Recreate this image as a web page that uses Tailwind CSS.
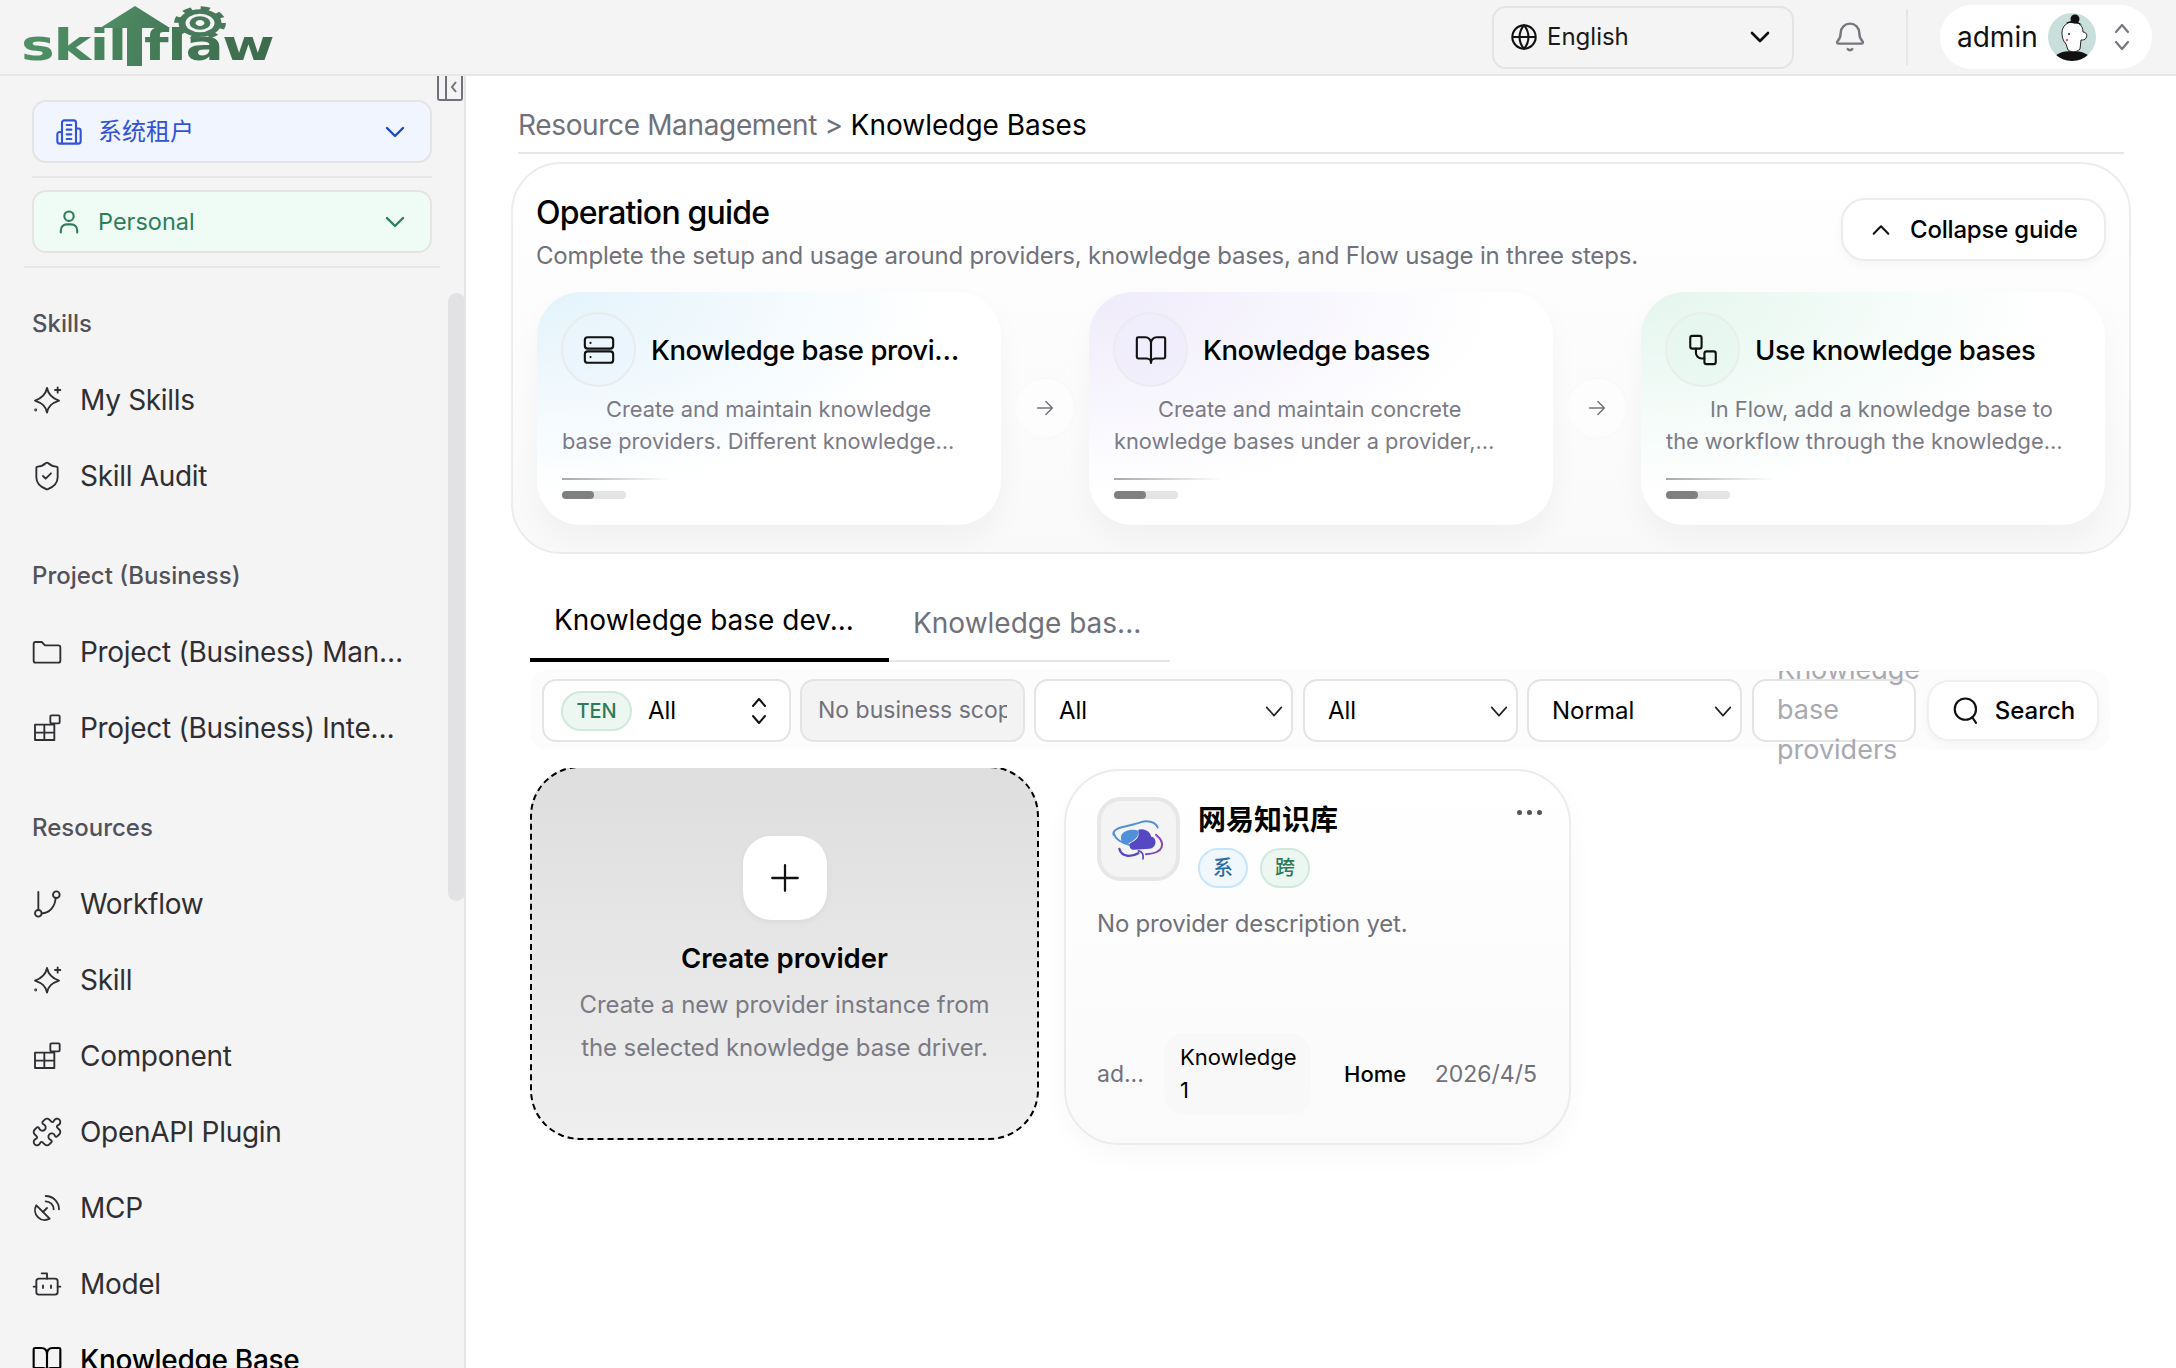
<!DOCTYPE html>
<html lang="en">
<head>
  <meta charset="UTF-8" />
  <title>Knowledge Bases | skillflaw</title>
  <script src="https://cdn.jsdelivr.net/npm/@tailwindcss/browser@4"></script>
</head>
<body class="bg-white text-black font-['Inter','Noto_Sans_CJK_SC',sans-serif]">
<div class="flex flex-col h-[1368px] w-[2176px] overflow-hidden">

  <!-- top bar -->
  <header class="flex items-center justify-between h-[76px] shrink-0 bg-[#f4f4f4] border-b-2 border-[#e6e6e6] pr-[24px]">
    <div class="relative w-[280px] h-[74px]">
      <span class="absolute left-[21px] top-[17px] origin-left scale-x-[1.35] font-['DejaVu_Sans'] font-bold text-[42px] leading-[58px] tracking-[-1px] text-transparent bg-clip-text bg-gradient-to-r from-[#4f9165] to-[#3c6a4c]">skillflaw</span>
      <svg class="absolute left-0 top-0" width="280" height="74" viewBox="0 0 280 74">
        <defs><linearGradient id="lg" x1="0" x2="1" y1="0" y2="0.3"><stop offset="0" stop-color="#4f9165"/><stop offset="1" stop-color="#47795a"/></linearGradient></defs>
        <path d="M100 28 135 6l35 22h-28v38h-15V28z" fill="url(#lg)"/>
        <g transform="translate(200 23) scale(1 .64)" fill="none" stroke="#47795a">
          <circle r="18" stroke-width="7"/>
          <circle r="23" stroke-width="6" stroke-dasharray="9 9.060"/>
          <circle r="7.500" stroke-width="6"/>
        </g>
      </svg>
    </div>
    <div class="flex items-center">
      <div class="flex items-center w-[302px] h-[63px] rounded-[14px] border-2 border-[#e4e4e4] pl-[16px] pr-[20px] mr-[40px]">
        <svg class="w-[28px] h-[28px] mr-[9px]" viewBox="0 0 24 24" fill="none" stroke="#111" stroke-width="1.800"><circle cx="12" cy="12" r="10"/><path d="M2 12h20M12 2a15 15 0 0 1 0 20 15 15 0 0 1 0-20z"/></svg>
        <span class="text-[24px] text-[#1a1a1a]">English</span>
        <svg class="ml-auto w-[24px] h-[24px]" viewBox="0 0 24 24" fill="none" stroke="#111" stroke-width="2.600" stroke-linecap="round" stroke-linejoin="round"><path d="m4 8 8 8 8-8"/></svg>
      </div>
      <svg class="w-[32px] h-[34px]" viewBox="0 0 24 24" fill="none" stroke="#77777f" stroke-width="1.800" stroke-linecap="round" stroke-linejoin="round"><path d="M3.300 17a1 1 0 0 1-.8-1.600C3.800 14 5 13 5 9a7 7 0 0 1 14 0c0 4 1.200 5 2.500 6.400a1 1 0 0 1-.8 1.600z"/><path d="M10.300 21a2 2 0 0 0 3.400 0"/></svg>
      <div class="w-[2px] h-[56px] bg-[#e6e6e6] ml-[40px] mr-[32px]"></div>
      <div class="flex items-center w-[212px] h-[64px] rounded-full bg-white pl-[17px]">
        <span class="text-[28px] text-[#111]">admin</span>
        <svg class="w-[48px] h-[48px] ml-[10px]" viewBox="0 0 48 48">
          <clipPath id="av"><circle cx="24" cy="24" r="24"/></clipPath>
          <g clip-path="url(#av)">
            <rect width="48" height="48" fill="#c9dfdb"/>
            <path d="M4 48c2-7 10-10 20-10s18 3 20 10z" fill="#111"/>
            <path d="M14 20c0-7 5-11 11-11s10 4 10 10c3 0 5 3 3 6-1 2-3 2-5 2l-1 9c-4 4-9 3-12 1l-2-6c-3-3-4-7-4-11z" fill="#fff" stroke="#222" stroke-width="1"/>
            <circle cx="27" cy="6" r="4.500" fill="#111"/>
            <path d="M18 10c4-3 12-3 16 2-5-2-10-2-16-2z" fill="#111"/>
            <circle cx="21" cy="21" r="1" fill="#222"/><circle cx="19" cy="27" r="1.200" fill="#e57"/>
          </g>
        </svg>
        <svg class="w-[22px] h-[34px] ml-[15px]" viewBox="0 0 22 34" fill="none" stroke="#77777f" stroke-width="2.200" stroke-linecap="round" stroke-linejoin="round"><path d="m5 12 6-7 6 7M5 22l6 7 6-7"/></svg>
      </div>
    </div>
  </header>

  <div class="flex flex-1 min-h-0">
    <!-- sidebar -->
    <aside class="relative w-[466px] shrink-0 bg-[#f4f4f4] border-r-2 border-[#e6e6e6] overflow-hidden">
      <button class="absolute left-[437px] top-0 w-[26px] h-[25px] flex border-2 border-t-0 border-[#71717a] rounded-b-[3px]">
        <span class="w-[8px] h-full border-r-2 border-[#71717a]"></span>
        <svg class="w-[14px] h-[22px]" viewBox="0 0 14 22" fill="none" stroke="#71717a" stroke-width="2"><path d="M9 6 5 11l4 5"/></svg>
      </button>
      <div class="absolute left-[448px] top-[217px] w-[17px] h-[608px] rounded-full bg-[#e2e2e5]"></div>

      <div class="px-[32px] pt-[24px]">
        <div class="flex items-center h-[63px] rounded-[14px] border-2 border-[#e4e4e4] bg-[#f0f5ff] pl-[21px] pr-[23px] text-[#3352d8]">
          <svg class="w-[28px] h-[28px]" viewBox="0 0 24 24" fill="none" stroke="#3352d8" stroke-width="1.800" stroke-linecap="round" stroke-linejoin="round"><path d="M6 22V4a2 2 0 0 1 2-2h8a2 2 0 0 1 2 2v18zM6 12H4a2 2 0 0 0-2 2v6a2 2 0 0 0 2 2h2M18 9h2a2 2 0 0 1 2 2v9a2 2 0 0 1-2 2h-2M10 6h4M10 10h4M10 14h4M10 18h4"/></svg>
          <span class="ml-[15px] text-[24px]">系统租户</span>
          <svg class="ml-auto w-[24px] h-[24px]" viewBox="0 0 24 24" fill="none" stroke="#2245c9" stroke-width="2.400" stroke-linecap="round" stroke-linejoin="round"><path d="m4 8 8 8 8-8"/></svg>
        </div>
        <div class="h-[2px] bg-[#e6e6e6] mt-[13px] mb-[12px]"></div>
        <div class="flex items-center h-[63px] rounded-[14px] border-2 border-[#e4e4e4] bg-[#effcf6] pl-[21px] pr-[23px] text-[#2e7d5b]">
          <svg class="w-[28px] h-[28px]" viewBox="0 0 24 24" fill="none" stroke="#2e7d5b" stroke-width="1.800" stroke-linecap="round" stroke-linejoin="round"><circle cx="12" cy="7" r="4"/><path d="M5 21v-2a5 5 0 0 1 5-5h4a5 5 0 0 1 5 5v2"/></svg>
          <span class="ml-[15px] text-[23.500px]">Personal</span>
          <svg class="ml-auto w-[24px] h-[24px]" viewBox="0 0 24 24" fill="none" stroke="#2e7d5b" stroke-width="2.400" stroke-linecap="round" stroke-linejoin="round"><path d="m4 8 8 8 8-8"/></svg>
        </div>
      </div>
      <div class="h-[2px] bg-[#e6e6e6] mx-[24px] mt-[13px]"></div>

      <nav class="pl-[32px] pr-[56px] pt-[39px] flex flex-col gap-[45px] text-[#2f2f33]">
        <section>
          <h3 class="h-[32px] leading-[34px] text-[24px] font-medium text-[#52525b] mb-[23px]">Skills</h3>
          <a class="flex items-center h-[76px] gap-[17px] text-[28px] tracking-[-0.3px]">
            <svg class="-ml-[1px] w-[32px] h-[32px] shrink-0" viewBox="0 0 24 24" fill="none" stroke="currentColor" stroke-width="1.400" stroke-linecap="round" stroke-linejoin="round"><path d="M12 3c1 5 3.500 7.500 9 9.500-5.500 2-8 4-9 9-1-5-3.500-7-9-9 5.500-2 8-4.500 9-9.500z"/><path d="M20 2.500v4M18 4.500h4"/><circle cx="3.500" cy="19.500" r=".4"/></svg>
            My Skills
          </a>
          <a class="flex items-center h-[76px] gap-[17px] text-[28px] tracking-[-0.3px]">
            <svg class="-ml-[1px] w-[32px] h-[32px] shrink-0" viewBox="0 0 24 24" fill="none" stroke="currentColor" stroke-width="1.400" stroke-linecap="round" stroke-linejoin="round"><path d="M20 13c0 5-3.500 7.500-7.660 8.950a1 1 0 0 1-.67-.01C7.500 20.500 4 18 4 13V6a1 1 0 0 1 1-1c2 0 4.500-1.200 6.240-2.720a1.170 1.170 0 0 1 1.520 0C14.510 3.810 17 5 19 5a1 1 0 0 1 1 1z"/><path d="m9 12 2 2 4-4"/></svg>
            Skill Audit
          </a>
        </section>
        <section>
          <h3 class="h-[32px] leading-[34px] text-[24px] font-medium text-[#52525b] mb-[23px]">Project (Business)</h3>
          <a class="flex items-center h-[76px] gap-[17px] text-[28px] tracking-[-0.3px]">
            <svg class="-ml-[1px] w-[32px] h-[32px] shrink-0" viewBox="0 0 24 24" fill="none" stroke="currentColor" stroke-width="1.400" stroke-linecap="round" stroke-linejoin="round"><path d="M2 6a1.500 1.500 0 0 1 1.500-1.500H8l2.500 2.500h10A1.500 1.500 0 0 1 22 8.500v10a1.500 1.500 0 0 1-1.500 1.500h-17A1.500 1.500 0 0 1 2 18.500z"/></svg>
            <span class="truncate">Project (Business) Management</span>
          </a>
          <a class="flex items-center h-[76px] gap-[17px] text-[28px] tracking-[-0.3px]">
            <svg class="-ml-[1px] w-[32px] h-[32px] shrink-0" viewBox="0 0 24 24" fill="none" stroke="currentColor" stroke-width="1.400" stroke-linecap="round" stroke-linejoin="round"><path d="M3 9.500h14.500V21H3zM10 9.500V21M3 15.500h14.500"/><rect x="14.500" y="2.500" width="7" height="6" rx=".8"/></svg>
            <span class="truncate">Project (Business) Integration</span>
          </a>
        </section>
        <section>
          <h3 class="h-[32px] leading-[34px] text-[24px] font-medium text-[#52525b] mb-[23px]">Resources</h3>
          <a class="flex items-center h-[76px] gap-[17px] text-[28px] tracking-[-0.3px]">
            <svg class="-ml-[1px] w-[32px] h-[32px] shrink-0" viewBox="0 0 24 24" fill="none" stroke="currentColor" stroke-width="1.400" stroke-linecap="round" stroke-linejoin="round"><circle cx="5.500" cy="19" r="2.500"/><circle cx="19" cy="5" r="2.500"/><path d="M5.500 16.500V3M8 19c6 0 10-5 10.500-11.500"/></svg>
            Workflow
          </a>
          <a class="flex items-center h-[76px] gap-[17px] text-[28px] tracking-[-0.3px]">
            <svg class="-ml-[1px] w-[32px] h-[32px] shrink-0" viewBox="0 0 24 24" fill="none" stroke="currentColor" stroke-width="1.400" stroke-linecap="round" stroke-linejoin="round"><path d="M12 3c1 5 3.500 7.500 9 9.500-5.500 2-8 4-9 9-1-5-3.500-7-9-9 5.500-2 8-4.500 9-9.500z"/><path d="M20 2.500v4M18 4.500h4"/><circle cx="3.500" cy="19.500" r=".4"/></svg>
            Skill
          </a>
          <a class="flex items-center h-[76px] gap-[17px] text-[28px] tracking-[-0.3px]">
            <svg class="-ml-[1px] w-[32px] h-[32px] shrink-0" viewBox="0 0 24 24" fill="none" stroke="currentColor" stroke-width="1.400" stroke-linecap="round" stroke-linejoin="round"><path d="M3 9.500h14.500V21H3zM10 9.500V21M3 15.500h14.500"/><rect x="14.500" y="2.500" width="7" height="6" rx=".8"/></svg>
            Component
          </a>
          <a class="flex items-center h-[76px] gap-[17px] text-[28px] tracking-[-0.3px]">
            <svg class="-ml-[1px] w-[32px] h-[32px] shrink-0" viewBox="0 0 24 24" fill="none" stroke="currentColor" stroke-width="1.400" stroke-linecap="round" stroke-linejoin="round"><path d="M19.439 7.85c-.049.322.059.648.289.878l1.568 1.568c.47.47.706 1.087.706 1.704s-.235 1.233-.706 1.704l-1.611 1.611a.98.98 0 0 1-.837.276c-.47-.07-.802-.48-.968-.925a2.501 2.501 0 1 0-3.214 3.214c.446.166.855.497.925.968a.979.979 0 0 1-.276.837l-1.61 1.61a2.404 2.404 0 0 1-1.705.707 2.402 2.402 0 0 1-1.704-.706l-1.568-1.568a1.026 1.026 0 0 0-.877-.29c-.493.074-.84.504-1.02.968a2.5 2.5 0 1 1-3.237-3.237c.464-.18.894-.527.967-1.02a1.026 1.026 0 0 0-.289-.877l-1.568-1.568A2.402 2.402 0 0 1 1.998 12c0-.617.236-1.234.706-1.704L4.23 8.77c.24-.24.581-.353.917-.303.515.077.877.528 1.073 1.01a2.5 2.5 0 1 0 3.259-3.259c-.482-.196-.933-.558-1.01-1.073-.05-.336.062-.676.303-.917l1.525-1.525A2.402 2.402 0 0 1 12 1.998c.617 0 1.234.236 1.704.706l1.568 1.568c.23.23.556.338.877.29.493-.074.84-.504 1.02-.968a2.5 2.5 0 1 1 3.237 3.237c-.464.18-.894.527-.967 1.02Z"/></svg>
            OpenAPI Plugin
          </a>
          <a class="flex items-center h-[76px] gap-[17px] text-[28px] tracking-[-0.3px]">
            <svg class="-ml-[1px] w-[32px] h-[32px] shrink-0" viewBox="0 0 24 24" fill="none" stroke="currentColor" stroke-width="1.400" stroke-linecap="round" stroke-linejoin="round"><path d="M4 10a7.310 7.310 0 0 0 10 10z"/><path d="m9 15 3-3M17 13a6 6 0 0 0-6-6M21 13A10 10 0 0 0 11 3"/></svg>
            MCP
          </a>
          <a class="flex items-center h-[76px] gap-[17px] text-[28px] tracking-[-0.3px]">
            <svg class="-ml-[1px] w-[32px] h-[32px] shrink-0" viewBox="0 0 24 24" fill="none" stroke="currentColor" stroke-width="1.400" stroke-linecap="round" stroke-linejoin="round"><path d="M12 8V4H8"/><rect x="4" y="8" width="16" height="12" rx="2"/><path d="M2 14h2M20 14h2M15 13v2M9 13v2"/></svg>
            Model
          </a>
          <a class="flex items-center h-[76px] gap-[17px] text-[28px] tracking-[-0.3px] font-medium text-black">
            <svg class="-ml-[1px] w-[32px] h-[32px] shrink-0" viewBox="0 0 24 24" fill="none" stroke="currentColor" stroke-width="1.600" stroke-linecap="round" stroke-linejoin="round"><path d="M12 7v14"/><path d="M3 18a1 1 0 0 1-1-1V4a1 1 0 0 1 1-1h5a4 4 0 0 1 4 4 4 4 0 0 1 4-4h5a1 1 0 0 1 1 1v13a1 1 0 0 1-1 1h-6a3 3 0 0 0-3 3 3 3 0 0 0-3-3z"/></svg>
            Knowledge Base
          </a>
        </section>
      </nav>
    </aside>

    <!-- main -->
    <main class="flex-1 min-w-0 pl-[45px] pr-[45px]">
      <div class="mx-[7px] border-b-2 border-[#e6e6e6] pt-[33px] pb-[11px] h-[78px] text-[28px] leading-[32px]">
        <span class="text-[#71717a] tracking-[-0.35px]">Resource Management &gt;</span> <span class="text-black">Knowledge Bases</span>
      </div>

      <section class="mt-[8px] h-[392px] rounded-[50px] border-2 border-[#ececec] bg-gradient-to-b from-white to-[#f9f9f9] pl-[23px] pr-[24px]">
        <div class="relative h-[127px]">
          <h2 class="absolute left-0 top-[29px] text-[32px] leading-[40px] font-medium tracking-[-0.8px]">Operation guide</h2>
          <p class="absolute left-0 top-[76px] text-[24px] leading-[32px] tracking-[-0.18px] text-[#71717a]">Complete the setup and usage around providers, knowledge bases, and Flow usage in three steps.</p>
          <button class="absolute right-[-1px] top-[34px] flex items-center gap-[18px] w-[265px] h-[63px] rounded-[24px] border-2 border-[#ececec] bg-white shadow-[0_4px_10px_rgba(0,0,0,0.04)] pl-[27px] text-[24px] font-medium tracking-[-0.2px]">
            <svg class="w-[22px] h-[22px]" viewBox="0 0 24 24" fill="none" stroke="#111" stroke-width="2.200" stroke-linecap="round" stroke-linejoin="round"><path d="m4 16 8-8 8 8"/></svg>
            Collapse guide
          </button>
        </div>

        <div class="grid grid-cols-[464px_88px_464px_88px_464px] ml-[1px] mt-[1px]">
          <!-- step 1 -->
          <div class="h-[233px] rounded-[44px] bg-[radial-gradient(ellipse_at_top_left,#e3f3fb_0%,#ffffff_62%)] shadow-[0_14px_30px_rgba(0,0,0,0.04)] pl-[25px] pr-[24px] pt-[20px]">
            <div class="flex items-center gap-[15px]">
              <span class="-ml-[1px] flex items-center justify-center w-[75px] h-[75px] shrink-0 rounded-full border-2 border-[#e9eced] bg-[#e9f5fb]/60">
                <svg class="w-[34px] h-[34px]" viewBox="0 0 24 24" fill="none" stroke="#111" stroke-width="1.500" stroke-linecap="round"><rect x="2" y="3" width="20" height="8" rx="2"/><rect x="2" y="13" width="20" height="8" rx="2"/><path d="M6 7h.01M6 17h.01"/></svg>
              </span>
              <h3 class="truncate mr-[8px] pt-[2px] text-[27.500px] font-medium tracking-[-0.45px]">Knowledge base providers</h3>
            </div>
            <p class="mt-[6px] text-[21.800px] leading-[32px] text-[#7b7b85] indent-[44px] line-clamp-2">Create and maintain knowledge base providers. Different knowledge base drivers expose different setup options.</p>
            <div class="mt-[21px] h-[2px] w-[108px] bg-gradient-to-r from-[#a8a8a8] to-transparent"></div>
            <div class="mt-[11px] h-[8px] w-[64px] rounded-full bg-[#e4e4e4]"><div class="h-full w-[32px] rounded-full bg-[#808080]"></div></div>
          </div>
          <div class="flex items-center justify-center">
            <span class="flex items-center justify-center w-[62px] h-[62px] rounded-full bg-white/50 border-2 border-[#fafafa] mt-[-2px]">
              <svg class="w-[22px] h-[22px]" viewBox="0 0 24 24" fill="none" stroke="#71717a" stroke-width="1.600" stroke-linecap="round" stroke-linejoin="round"><path d="M4 12h16M13 5l7 7-7 7"/></svg>
            </span>
          </div>
          <!-- step 2 -->
          <div class="h-[233px] rounded-[44px] bg-[radial-gradient(ellipse_at_top_left,#efebfb_0%,#ffffff_62%)] shadow-[0_14px_30px_rgba(0,0,0,0.04)] pl-[25px] pr-[24px] pt-[20px]">
            <div class="flex items-center gap-[15px]">
              <span class="-ml-[1px] flex items-center justify-center w-[75px] h-[75px] shrink-0 rounded-full border-2 border-[#ecebf0] bg-[#efebfb]/60">
                <svg class="w-[34px] h-[34px]" viewBox="0 0 24 24" fill="none" stroke="#111" stroke-width="1.500" stroke-linecap="round" stroke-linejoin="round"><path d="M12 7v14"/><path d="M3 18a1 1 0 0 1-1-1V4a1 1 0 0 1 1-1h5a4 4 0 0 1 4 4 4 4 0 0 1 4-4h5a1 1 0 0 1 1 1v13a1 1 0 0 1-1 1h-6a3 3 0 0 0-3 3 3 3 0 0 0-3-3z"/></svg>
              </span>
              <h3 class="truncate mr-[8px] pt-[2px] text-[27.500px] font-medium tracking-[-0.45px]">Knowledge bases</h3>
            </div>
            <p class="mt-[6px] text-[21.800px] leading-[32px] text-[#7b7b85] indent-[44px] line-clamp-2">Create and maintain concrete knowledge bases under a provider, organizing documents and retrieval settings.</p>
            <div class="mt-[21px] h-[2px] w-[108px] bg-gradient-to-r from-[#a8a8a8] to-transparent"></div>
            <div class="mt-[11px] h-[8px] w-[64px] rounded-full bg-[#e4e4e4]"><div class="h-full w-[32px] rounded-full bg-[#808080]"></div></div>
          </div>
          <div class="flex items-center justify-center">
            <span class="flex items-center justify-center w-[62px] h-[62px] rounded-full bg-white/50 border-2 border-[#fafafa] mt-[-2px]">
              <svg class="w-[22px] h-[22px]" viewBox="0 0 24 24" fill="none" stroke="#71717a" stroke-width="1.600" stroke-linecap="round" stroke-linejoin="round"><path d="M4 12h16M13 5l7 7-7 7"/></svg>
            </span>
          </div>
          <!-- step 3 -->
          <div class="h-[233px] rounded-[44px] bg-[radial-gradient(ellipse_at_top_left,#e4f6ee_0%,#ffffff_62%)] shadow-[0_14px_30px_rgba(0,0,0,0.04)] pl-[25px] pr-[24px] pt-[20px]">
            <div class="flex items-center gap-[15px]">
              <span class="-ml-[1px] flex items-center justify-center w-[75px] h-[75px] shrink-0 rounded-full border-2 border-[#e9eeec] bg-[#e4f6ee]/60">
                <svg class="w-[34px] h-[34px]" viewBox="0 0 24 24" fill="none" stroke="#111" stroke-width="1.500" stroke-linecap="round" stroke-linejoin="round"><rect x="3" y="2" width="8" height="9" rx="1.500"/><rect x="13" y="13" width="8" height="9" rx="1.500"/><path d="M7 11v3a4 4 0 0 0 4 4h2"/></svg>
              </span>
              <h3 class="truncate mr-[8px] pt-[2px] text-[27.500px] font-medium tracking-[-0.45px]">Use knowledge bases</h3>
            </div>
            <p class="mt-[6px] text-[21.800px] leading-[32px] text-[#7b7b85] indent-[44px] line-clamp-2">In Flow, add a knowledge base to the workflow through the knowledge base retrieval node for answers.</p>
            <div class="mt-[21px] h-[2px] w-[108px] bg-gradient-to-r from-[#a8a8a8] to-transparent"></div>
            <div class="mt-[11px] h-[8px] w-[64px] rounded-full bg-[#e4e4e4]"><div class="h-full w-[32px] rounded-full bg-[#808080]"></div></div>
          </div>
        </div>
      </section>

      <!-- tabs -->
      <div class="ml-[19px] mt-[36px] flex w-[640px] h-[72px] border-b-2 border-[#e6e6e6]">
        <div class="flex items-center w-[359px] h-[72px] border-b-4 border-black pl-[24px] text-[28px] text-black pb-[8px]">Knowledge base dev...</div>
        <div class="flex items-center pl-[24px] text-[28px] text-[#71717a] pb-[4px]">Knowledge bas...</div>
      </div>

      <!-- filters -->
      <div class="relative ml-[19px] mt-[8px] w-[1580px] h-[80px] rounded-[18px] bg-[#fcfcfc] flex items-center gap-[9px] px-[12px] pt-[1px] text-[24px]">
        <div class="flex items-center w-[249px] h-[63px] shrink-0 rounded-[14px] border-2 border-[#e4e4e4] bg-white pl-[17px] pr-[20px]">
          <span class="flex items-center justify-center w-[71px] h-[40px] rounded-full border-2 border-[#cfe9dc] bg-[#edf7f2] text-[20px] font-medium text-[#2f7a58]">TEN</span>
          <span class="ml-[16px]">All</span>
          <svg class="ml-auto w-[20px] h-[30px]" viewBox="0 0 20 30" fill="none" stroke="#111" stroke-width="2" stroke-linecap="round" stroke-linejoin="round"><path d="m4 10 6-7 6 7M4 20l6 7 6-7"/></svg>
        </div>
        <div class="flex items-center w-[225px] h-[63px] shrink-0 rounded-[14px] border-2 border-[#e4e4e4] bg-[#f3f3f3] px-[16px] text-[23px] text-[#71717a] overflow-hidden whitespace-nowrap"><span class="block w-[190px] overflow-hidden">No business scope</span></div>
        <div class="flex items-center w-[259px] h-[63px] shrink-0 rounded-[14px] border-2 border-[#e4e4e4] bg-white pl-[23px] pr-[6px]">
          All
          <svg class="ml-auto w-[22px] h-[22px]" viewBox="0 0 24 24" fill="none" stroke="#222" stroke-width="1.800" stroke-linecap="round" stroke-linejoin="round"><path d="m4 8 8 9 8-9"/></svg>
        </div>
        <div class="flex items-center ml-[1px] w-[215px] h-[63px] shrink-0 rounded-[14px] border-2 border-[#e4e4e4] bg-white pl-[23px] pr-[6px]">
          All
          <svg class="ml-auto w-[22px] h-[22px]" viewBox="0 0 24 24" fill="none" stroke="#222" stroke-width="1.800" stroke-linecap="round" stroke-linejoin="round"><path d="m4 8 8 9 8-9"/></svg>
        </div>
        <div class="flex items-center w-[215px] h-[63px] shrink-0 rounded-[14px] border-2 border-[#e4e4e4] bg-white pl-[23px] pr-[6px]">
          Normal
          <svg class="ml-auto w-[22px] h-[22px]" viewBox="0 0 24 24" fill="none" stroke="#222" stroke-width="1.800" stroke-linecap="round" stroke-linejoin="round"><path d="m4 8 8 9 8-9"/></svg>
        </div>
        <div class="relative ml-[1px] w-[164px] h-[63px] shrink-0 rounded-[14px] border-2 border-[#e4e4e4] bg-white">
          <div class="absolute left-[23px] top-[-31px] w-[150px] text-[27px] leading-[40px] text-[#a9a9b2] [clip-path:inset(21px_-20px_-40px_-20px)] whitespace-normal">Knowledge base providers</div>
        </div>
        <button class="flex items-center justify-center gap-[14px] w-[172px] h-[61px] shrink-0 ml-[2px] rounded-[22px] border-2 border-[#efefef] bg-white shadow-[0_3px_8px_rgba(0,0,0,0.04)] font-medium">
          <svg class="w-[30px] h-[30px]" viewBox="0 0 24 24" fill="none" stroke="#111" stroke-width="1.700" stroke-linecap="round"><circle cx="11.500" cy="10.500" r="8.500"/><path d="m17 17 3 4.500"/></svg>
          Search
        </button>
      </div>

      <!-- provider cards -->
      <div class="ml-[19px] mt-[18px] flex gap-[25px] items-start">
        <div class="overflow-hidden h-[372px] w-[509px]">
          <div class="mt-[-2px] h-[374px] flex flex-col items-center rounded-[50px] border-2 border-dashed border-black bg-gradient-to-b from-[#dedede] to-[#efefef] pt-[68px] text-center">
            <span class="flex items-center justify-center w-[84px] h-[84px] rounded-[28px] bg-white shadow-[0_2px_6px_rgba(0,0,0,0.05)]">
              <svg class="w-[34px] h-[34px]" viewBox="0 0 24 24" fill="none" stroke="#111" stroke-width="1.600" stroke-linecap="round"><path d="M12 3v18M3 12h18"/></svg>
            </span>
            <h3 class="mt-[20px] text-[27.500px] leading-[36px] font-semibold">Create provider</h3>
            <p class="mt-[7px] w-[440px] text-[24px] leading-[43px] tracking-[-0.1px] text-[#7a7a85]">Create a new provider instance from the selected knowledge base driver.</p>
          </div>
        </div>

        <div class="relative mt-[1px] w-[507px] h-[376px] rounded-[55px] border-2 border-[#ececec] bg-gradient-to-b from-white to-[#fafafa] shadow-[0_10px_26px_rgba(0,0,0,0.03)] pl-[31px] pr-[31px]">
          <div class="flex pt-[26px]">
            <span class="flex items-center justify-center w-[83px] h-[84px] rounded-[24px] border-4 border-[#e7e7e7] bg-[#f4f4f4]">
              <svg width="55" height="42" viewBox="30 50 165 125" fill="none" stroke-linecap="round">
                <path d="M38 100C30 75 90 75 120 62c20-7 45 0 50 16" stroke="#4f90d9" stroke-width="6"/>
                <path d="M38 96c7 22 27 29 47 34" stroke="#4f90d9" stroke-width="6"/>
                <path d="M60 105c2-17 35-25 52-17 6 12-12 30-24 34-16 10-30 3-28-17z" fill="#4f90d9"/>
                <path d="M112 85c18-7 38 7 38 20 20 3 18 35-5 37l-45 3c-15 0-20-17-8-23 13-4 26-17 20-37z" fill="#5648c2"/>
                <path d="M55 142c7 28 40 23 57 13" stroke="#5648c2" stroke-width="7"/>
                <path d="M165 100c30 25 25 55-30 58" stroke="#8544b4" stroke-width="6"/>
                <path d="M112 148c13 2 16 12 14 24" stroke="#5648c2" stroke-width="5"/>
              </svg>
            </span>
            <div class="ml-[18px]">
              <h3 class="text-[28px] leading-[40px] font-semibold mt-[3px]">网易知识库</h3>
              <div class="flex gap-[12px] mt-[8px]">
                <span class="flex items-center justify-center w-[50px] h-[40px] rounded-full border-2 border-[#c7e5fb] bg-[#f0f8fe] text-[20px] font-medium text-[#2a6ea8]">系</span>
                <span class="flex items-center justify-center w-[50px] h-[40px] rounded-full border-2 border-[#cfe9dc] bg-[#edf7f2] text-[20px] font-medium text-[#2f7a58]">跨</span>
              </div>
            </div>
            <div class="absolute right-[27px] top-[39px] flex gap-[5px]">
              <i class="block w-[5px] h-[5px] rounded-full bg-[#555]"></i><i class="block w-[5px] h-[5px] rounded-full bg-[#555]"></i><i class="block w-[5px] h-[5px] rounded-full bg-[#555]"></i>
            </div>
          </div>
          <p class="mt-[20px] text-[24px] leading-[32px] tracking-[-0.2px] text-[#71717a]">No provider description yet.</p>
          <div class="absolute left-[31px] right-[32px] top-[262px] flex items-center h-[82px]">
            <span class="text-[#71717a] w-[67px] text-[23px]">ad...</span>
            <span class="w-[147px] h-[82px] rounded-[20px] bg-[#f8f8f8] pl-[16px] pt-[8px] text-[22px] leading-[33px] text-black">Knowledge 1</span>
            <span class="ml-[33px] text-[22px] font-medium">Home</span>
            <span class="ml-auto text-[23px] text-[#71717a]">2026/4/5</span>
          </div>
        </div>
      </div>
    </main>
  </div>
</div>
</body>
</html>
